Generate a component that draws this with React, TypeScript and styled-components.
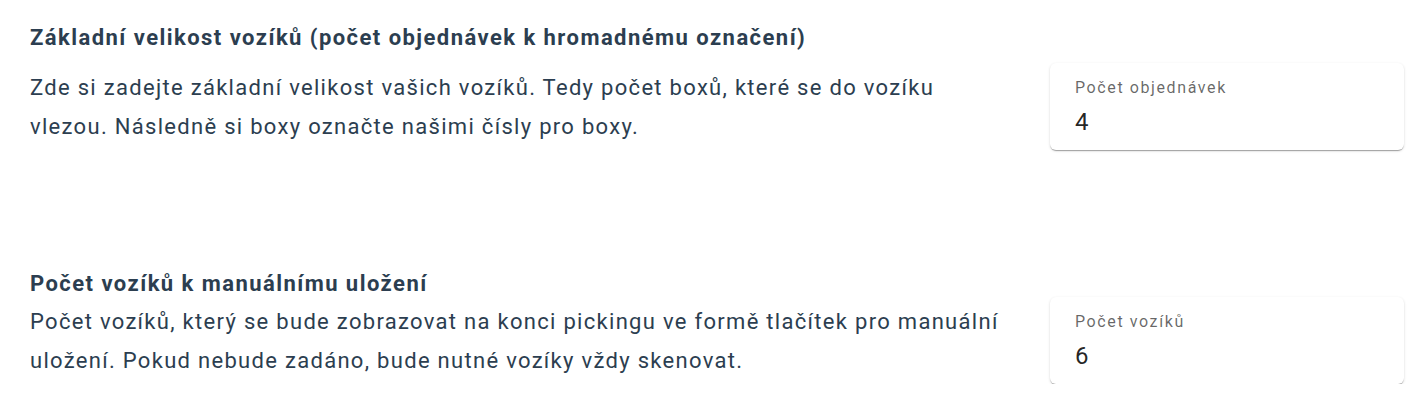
import React from "react";
import styled, { createGlobalStyle } from "styled-components";

const GlobalStyle = createGlobalStyle`
  html, body {
    margin: 0;
    padding: 0;
    background: #ffffff;
  }
  body {
    font-family: Roboto, "Noto Sans", Arial, sans-serif;
  }
`;

const Page = styled.div`
  display: flex;
  flex-direction: column;
  gap: 121px;
  padding: 25px 21px 0 30px;
  width: 1425px;
  box-sizing: border-box;
`;

const Section = styled.section`
  display: flex;
  flex-direction: column;
`;

const Heading = styled.h3<{ $gap: number }>`
  margin: 0 0 ${(p) => p.$gap}px 0;
  font-size: 22px;
  line-height: 26px;
  font-weight: 700;
  letter-spacing: 1.45px;
  color: #2c3e50;
`;

const Row = styled.div`
  display: flex;
  align-items: center;
  gap: 40px;
`;

const Description = styled.p`
  flex: 1;
  margin: 0;
  font-size: 22px;
  line-height: 39px;
  letter-spacing: 1.3px;
  color: #2c3e50;
`;

const Card = styled.label`
  flex: 0 0 354px;
  height: 87px;
  box-sizing: border-box;
  display: flex;
  flex-direction: column;
  padding: 15px 24px 0 25px;
  background: #ffffff;
  border-radius: 6px;
  box-shadow: 0 2px 1px -1px rgba(0, 0, 0, 0.2), 0 1px 1px 0 rgba(0, 0, 0, 0.14),
    0 1px 3px 0 rgba(0, 0, 0, 0.12);
`;

const FieldLabel = styled.span`
  font-size: 16px;
  line-height: 20px;
  letter-spacing: 1.6px;
  color: rgba(0, 0, 0, 0.6);
`;

const FieldInput = styled.input`
  border: none;
  outline: none;
  padding: 0;
  margin: 10px 0 0 0;
  font-family: Roboto, "Noto Sans", Arial, sans-serif;
  font-size: 24px;
  line-height: 28px;
  height: 28px;
  color: rgba(0, 0, 0, 0.87);
  background: transparent;
  width: 100%;
`;

type SettingProps = {
  title: string;
  text: string;
  label: string;
  value: string;
  gap: number;
};

const Setting = ({ title, text, label, value, gap }: SettingProps) => (
  <Section>
    <Heading $gap={gap}>{title}</Heading>
    <Row>
      <Description>{text}</Description>
      <Card>
        <FieldLabel>{label}</FieldLabel>
        <FieldInput defaultValue={value} />
      </Card>
    </Row>
  </Section>
);

export default function App() {
  return (
    <>
      <GlobalStyle />
      <Page>
        <Setting
          title="Základní velikost vozíků (počet objednávek k hromadnému označení)"
          text="Zde si zadejte základní velikost vašich vozíků. Tedy počet boxů, které se do vozíku vlezou. Následně si boxy označte našimi čísly pro boxy."
          label="Počet objednávek"
          value="4"
          gap={12}
        />
        <Setting
          title="Počet vozíků k manuálnímu uložení"
          text="Počet vozíků, který se bude zobrazovat na konci pickingu ve formě tlačítek pro manuální uložení. Pokud nebude zadáno, bude nutné vozíky vždy skenovat."
          label="Počet vozíků"
          value="6"
          gap={0}
        />
      </Page>
    </>
  );
}
